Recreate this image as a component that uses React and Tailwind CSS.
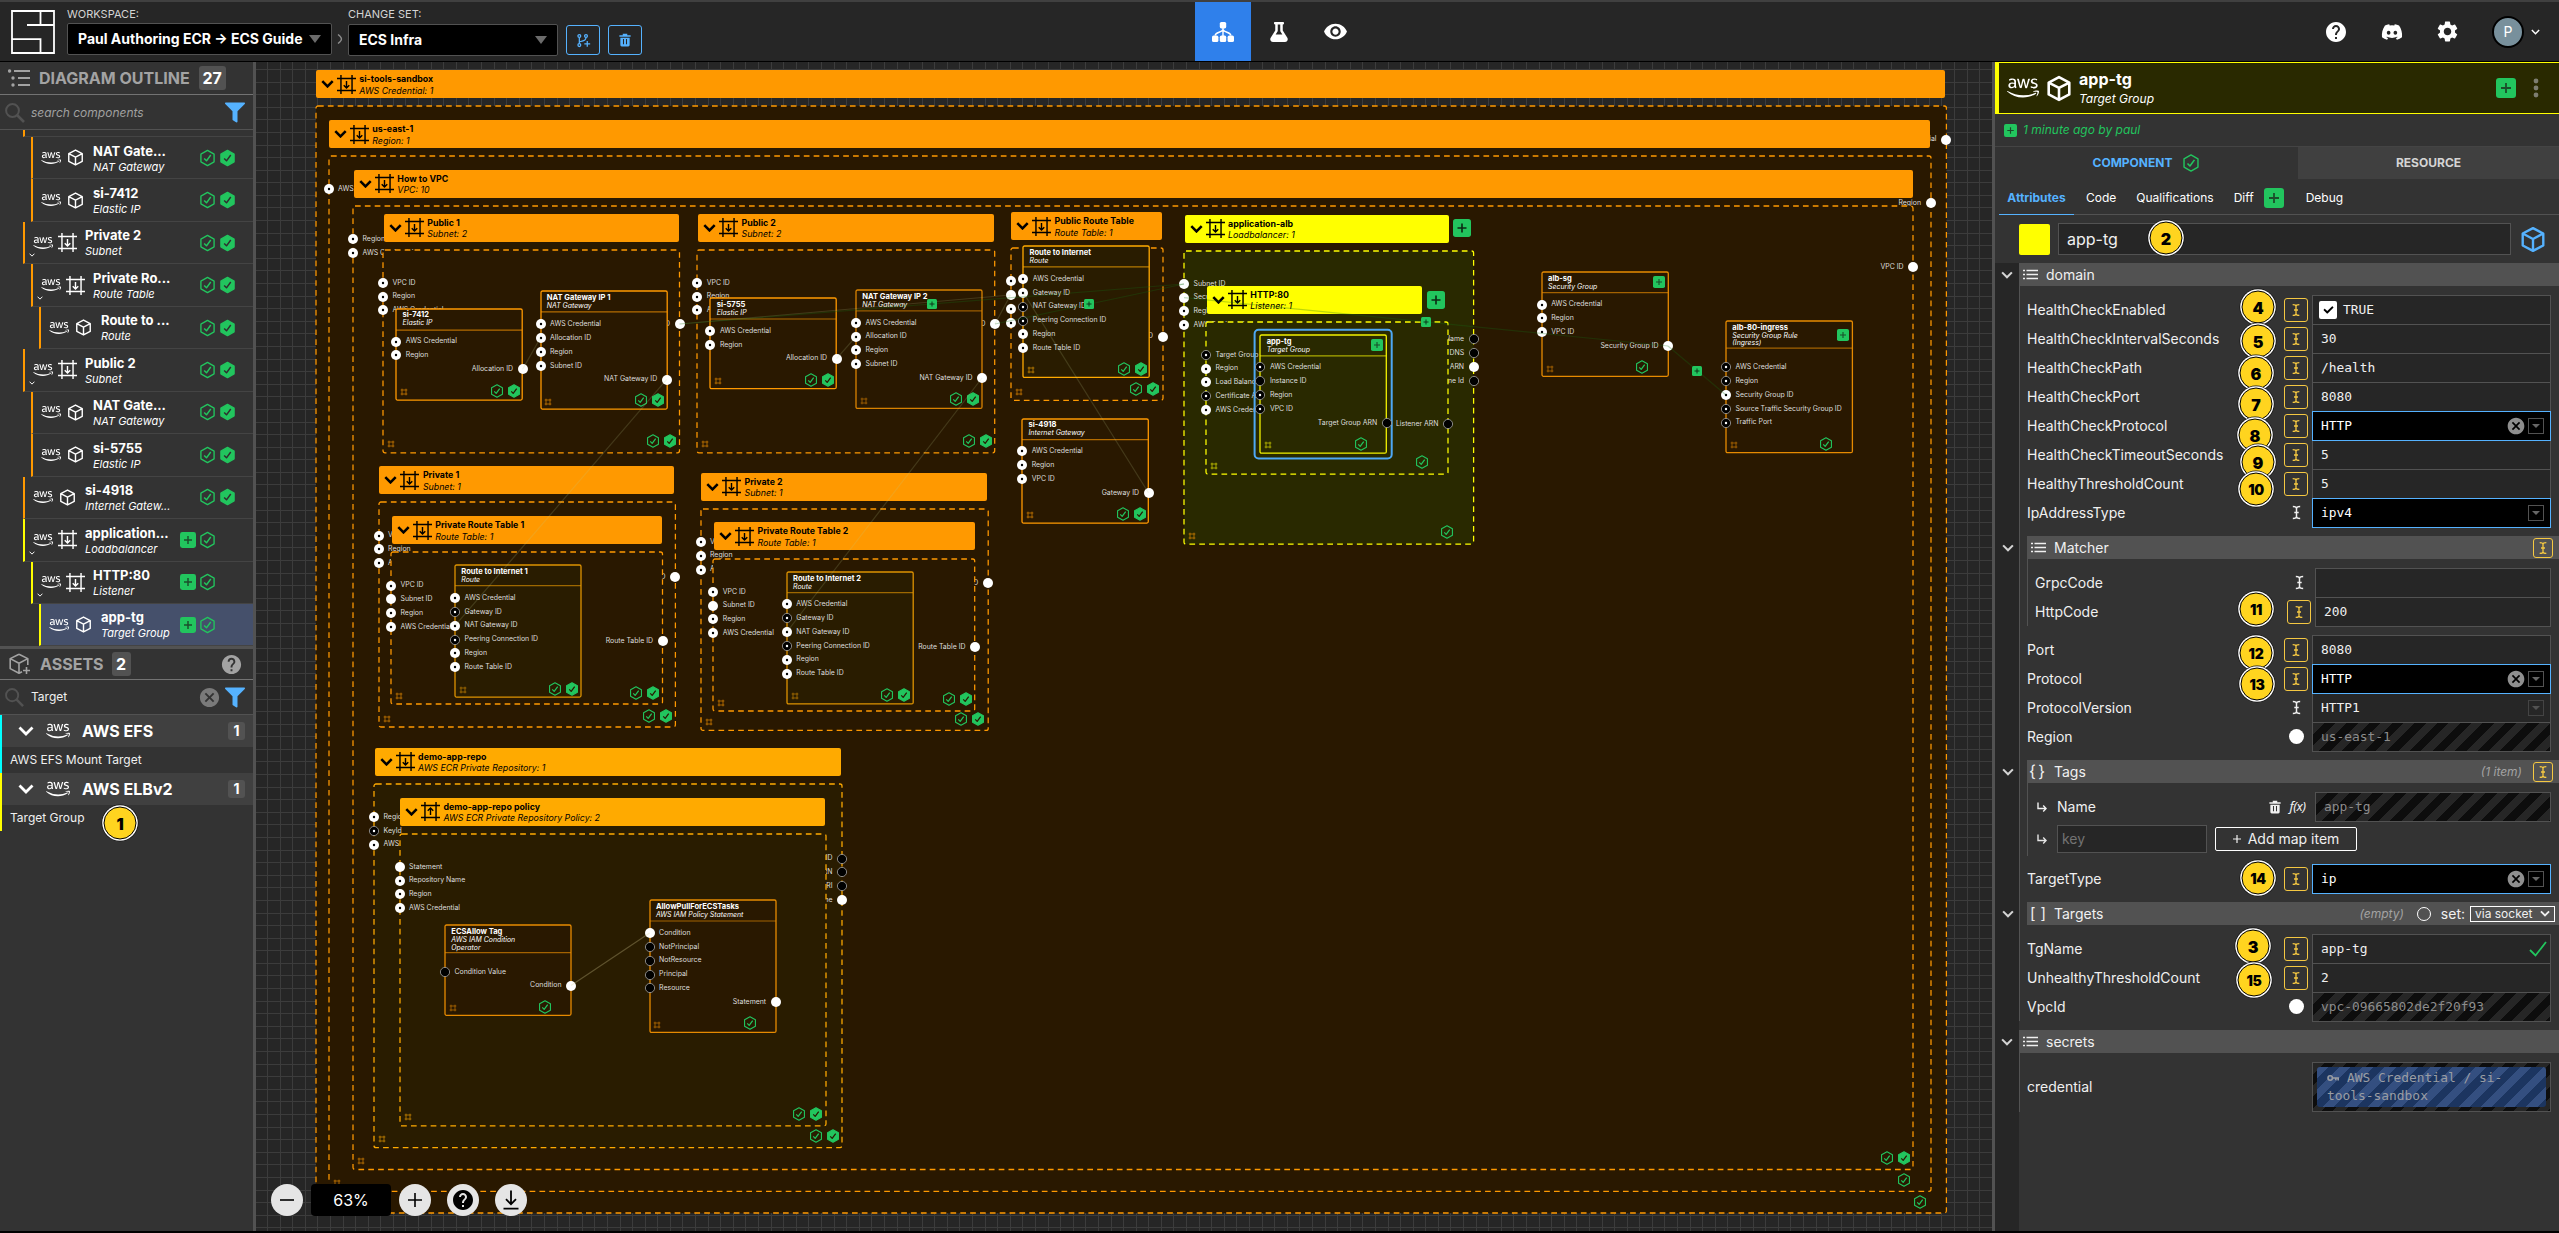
import React from 'react';
import { FaAws, FaFilter, FaFlask, FaDiscord, FaCheck } from 'react-icons/fa';
import { MdVisibility, MdSettings, MdHelp, MdCancel } from 'react-icons/md';

/* ---------- icons ---------- */

const Aws = ({ className }) => <FaAws className={className} />;

const Cube = ({ className, w = 2 }) => (
  <svg viewBox="0 0 24 24" className={className} fill="none" stroke="currentColor" strokeWidth={w} strokeLinejoin="round">
    <path d="M12 1.5 21.5 6.5V17.5L12 22.5 2.5 17.5V6.5Z M2.5 6.5 12 11.5 21.5 6.5 M12 11.5V22.5" />
  </svg>
);

const FrameIcon = ({ className, up = false }) => (
  <svg viewBox="0 0 24 24" className={className} fill="none" stroke="currentColor" strokeWidth="1.8">
    <path d="M5 0V24M19 0V24M0 4.5H24M0 19.5H24" />
    <path d={up ? 'M12 16.5V8M8.5 11.2 12 7.7 15.5 11.2' : 'M12 7.5V16M8.5 12.8 12 16.3 15.5 12.8'} />
  </svg>
);

const HashIcon = ({ className }) => (
  <svg viewBox="0 0 12 12" className={className} fill="none" stroke="currentColor" strokeWidth="1.3">
    <path d="M3 1V11M9 1V11M1 3H11M1 9H11" />
  </svg>
);

const HexCheck = ({ className, filled = false, dark = '#2f2f2f' }) => (
  <svg viewBox="0 0 24 24" className={className} fill="none" strokeLinejoin="round">
    <path d="M12 1.3 21.3 6.6V17.4L12 22.7 2.7 17.4V6.6Z" fill={filled ? '#22c55e' : 'none'} stroke="#22c55e" strokeWidth="1.9" />
    <path d="M7.3 12.6 10.6 16 16.6 7.8" stroke={filled ? dark : '#22c55e'} strokeWidth="2.1" />
  </svg>
);

const Chevron = ({ className, w = 3 }) => (
  <svg viewBox="0 0 16 10" className={className} fill="none" stroke="currentColor" strokeWidth={w}>
    <path d="M1.5 1.5 8 8 14.5 1.5" />
  </svg>
);

const PlusBadge = ({ className, dark = '#1b4d2b' }) => (
  <svg viewBox="0 0 20 20" className={className}>
    <rect width="20" height="20" rx="3" fill="#22c55e" />
    <path d="M10 5V15M5 10H15" stroke={dark} strokeWidth="1.8" />
  </svg>
);

const ListIcon = ({ className }) => (
  <svg viewBox="0 0 15 11" className={className} stroke="currentColor" strokeWidth="1.6">
    <path d="M0 1.5H2M0 5.5H2M0 9.5H2M3.5 1.5H15M3.5 5.5H15M3.5 9.5H15" />
  </svg>
);

const OutlineIcon = ({ className }) => (
  <svg viewBox="0 0 22 18" className={className} stroke="currentColor" strokeWidth="1.8" fill="currentColor">
    <path d="M6 2H22M10 9H22M10 16H22" />
    <circle cx="1.6" cy="2" r="0.8" />
    <circle cx="5" cy="9" r="0.8" />
    <circle cx="5" cy="16" r="0.8" />
  </svg>
);

const SearchIcon = ({ className }) => (
  <svg viewBox="0 0 20 20" className={className} fill="none" stroke="currentColor" strokeWidth="2">
    <circle cx="7.5" cy="7.5" r="6.4" />
    <path d="M12 12 19 19" strokeWidth="2.6" />
  </svg>
);

const TextCursor = ({ className }) => (
  <svg viewBox="0 0 12 16" className={className} fill="none" stroke="currentColor" strokeWidth="1.6">
    <path d="M2 1.5C4 1.5 6 2 6 3.6 6 2 8 1.5 10 1.5M6 3V13M2 14.5C4 14.5 6 14 6 12.4 6 14 8 14.5 10 14.5M3.6 8H8.4" />
  </svg>
);

const TrashIcon = ({ className }) => (
  <svg viewBox="0 0 16 18" className={className} fill="currentColor" fillRule="evenodd">
    <path d="M5 0.8H11V2.6H15.5V4.8H0.5V2.6H5ZM1.8 6H14.2V15.6Q14.2 17.5 12.3 17.5H3.7Q1.8 17.5 1.8 15.6ZM5.3 7.5V14.8H6.7V7.5ZM9.3 7.5V14.8H10.7V7.5Z" />
  </svg>
);

const KeyIcon = ({ className }) => (
  <svg viewBox="0 0 12 8" className={className} fill="none" stroke="currentColor" strokeWidth="1.6">
    <circle cx="3.2" cy="4" r="2.2" />
    <path d="M5.4 4H11.2V6.6M8.8 4V6.2" />
  </svg>
);

const BranchPlus = ({ className }) => (
  <svg viewBox="0 0 18 18" className={className} fill="none" stroke="currentColor" strokeWidth="1.5">
    <circle cx="4" cy="3.5" r="1.7" />
    <circle cx="4" cy="14.5" r="1.7" />
    <circle cx="12" cy="3.5" r="1.7" />
    <path d="M4 5.2V12.8M12 5.2C12 8 11 9 4.5 10.5M13.5 9.5V16.5M10 13H17" />
  </svg>
);

const SitemapIcon = ({ className }) => (
  <svg viewBox="0 0 22 20" className={className} fill="currentColor">
    <rect x="7.8" y="0" width="6.4" height="6.4" rx="1.6" />
    <rect x="0" y="13.6" width="6.4" height="6.4" rx="1.6" />
    <rect x="7.8" y="13.6" width="6.4" height="6.4" rx="1.6" />
    <rect x="15.6" y="13.6" width="6.4" height="6.4" rx="1.6" />
    <path d="M11 6V14M3.2 13.6C3.2 9.5 10 11 11 7.5 12 11 18.8 9.5 18.8 13.6" fill="none" stroke="currentColor" strokeWidth="1.4" />
  </svg>
);

const Logo = ({ className }) => (
  <svg viewBox="0 0 44 44" className={className} fill="none" stroke="#fff" strokeWidth="1.8">
    <path d="M1 1H43V43H1ZM29.5 1V15M16 15H43M1 29.2H29.5V43" />
  </svg>
);

const ReturnArrow = ({ className }) => (
  <svg viewBox="0 0 10 10" className={className} fill="none" stroke="currentColor" strokeWidth="1.4">
    <path d="M1 0.5V6.5H9M6.2 3.6 9.1 6.5 6.2 9.4" />
  </svg>
);

/* ---------- top bar ---------- */

const Triangle = () => (
  <svg viewBox="0 0 12 8" className="h-[8px] w-[12px]" fill="#6b6b6b">
    <path d="M0 0H12L6 8Z" />
  </svg>
);

function TopBar() {
  return (
    <header className="flex h-[62px] justify-between border-t-2 border-b-[1px] border-t-[#404040] border-b-black bg-[#262626] text-white">
      <div className="flex w-[1195px] items-start">
        <Logo className="mt-[8px] ml-[11px] h-[44px] w-[44px]" />
        <div className="ml-[12px] pt-[5px]">
          <div className="text-[11px] leading-[14px] text-[#d4d4d4]">WORKSPACE:</div>
          <div className="mt-[2px] flex h-[32px] w-[265px] items-center justify-between rounded-[2px] border border-[#525252] bg-black pr-[10px] pl-[10px] text-sm font-bold whitespace-nowrap">
            Paul Authoring ECR → ECS Guide
            <Triangle />
          </div>
        </div>
        <svg viewBox="0 0 6 10" className="mt-[32px] ml-[5px] h-[10px] w-[6px]" fill="none" stroke="#8c8c8c" strokeWidth="1.3">
          <path d="M1 0.5C3 2 4.5 4 4.5 5 4.5 6 3 8 1 9.5" />
        </svg>
        <div className="ml-[5px] pt-[5px]">
          <div className="text-[11px] leading-[14px] text-[#d4d4d4]">CHANGE SET:</div>
          <div className="mt-[3px] flex h-[32px] w-[210px] items-center justify-between rounded-[2px] border border-[#525252] bg-black pr-[10px] pl-[10px] text-sm font-bold">
            ECS Infra
            <Triangle />
          </div>
        </div>
        <div className="mt-[23px] ml-[8px] flex gap-2 text-[#55b2ff]">
          <div className="flex h-[30px] w-[34px] items-center justify-center rounded-[3px] border border-[#55b2ff]">
            <BranchPlus className="h-[15px] w-[15px]" />
          </div>
          <div className="flex h-[30px] w-[34px] items-center justify-center rounded-[3px] border border-[#55b2ff]">
            <TrashIcon className="h-[14px] w-[12px]" />
          </div>
        </div>
      </div>
      <nav className="flex flex-1">
        <div className="flex w-[56px] items-center justify-center bg-[#2f80eb]">
          <SitemapIcon className="h-[20px] w-[22px]" />
        </div>
        <div className="flex w-[56px] items-center justify-center">
          <FaFlask className="h-[20px] w-[20px]" />
        </div>
        <div className="flex w-[56px] items-center justify-center">
          <MdVisibility className="h-[25px] w-[25px]" />
        </div>
      </nav>
      <div className="flex items-center pr-[19px]">
        <MdHelp className="mr-[33px] h-[24px] w-[24px]" />
        <FaDiscord className="mr-[32px] h-[22px] w-[22px]" />
        <MdSettings className="mr-[32px] h-[25px] w-[25px]" />
        <div className="flex h-[32px] w-[32px] items-center justify-center rounded-full border-2 border-black bg-[#78909c] text-sm">P</div>
        <Chevron className="ml-[7px] h-[6px] w-[9px]" w={2.6} />
      </div>
    </header>
  );
}

/* ---------- left sidebar ---------- */

const OUTLINE_ROWS = [
  { d: 1, name: 'NAT Gate...', sub: 'NAT Gateway' },
  { d: 1, name: 'si-7412', sub: 'Elastic IP' },
  { d: 0, name: 'Private 2', sub: 'Subnet', frame: true },
  { d: 1, name: 'Private Ro...', sub: 'Route Table', frame: true },
  { d: 2, name: 'Route to ...', sub: 'Route' },
  { d: 0, name: 'Public 2', sub: 'Subnet', frame: true },
  { d: 1, name: 'NAT Gate...', sub: 'NAT Gateway' },
  { d: 1, name: 'si-5755', sub: 'Elastic IP' },
  { d: 0, name: 'si-4918', sub: 'Internet Gatew...' },
  { d: 0, name: 'application...', sub: 'Loadbalancer', frame: true, added: true },
  { d: 1, name: 'HTTP:80', sub: 'Listener', frame: true, added: true },
  { d: 2, name: 'app-tg', sub: 'Target Group', added: true, selected: true },
];

const INDENT = ['ml-[23px]', 'ml-[31px]', 'ml-[39px]'];

function OutlineRow({ row }) {
  return (
    <div
      className={`flex h-[42.46px] shrink-0 border-b border-l-2 border-b-[#444] ${INDENT[row.d]} ${row.added ? 'border-l-[#ffff00]' : 'border-l-[#ff9900]'} ${row.selected ? 'bg-[#45506b]' : ''}`}
    >
      <div className="relative flex w-[60px] shrink-0 items-center pl-[8px]">
        <Aws className="h-[20px] w-[20px]" />
        <div className="ml-[3px] flex w-[22px] justify-center">
          {row.frame ? <FrameIcon className="h-[19px] w-[19px]" /> : <Cube className="h-[17px] w-[17px]" />}
        </div>
        {row.frame && <Chevron className="absolute bottom-[6px] left-[4px] h-[4px] w-[6px]" w={2.6} />}
      </div>
      <div className="min-w-0 flex-1 pt-[5.5px] whitespace-nowrap">
        <div className="text-[13px] leading-[17px] font-bold">{row.name}</div>
        <div className="text-[11px] leading-[15px] italic">{row.sub}</div>
      </div>
      <div className={`flex items-center gap-[3px] ${row.added ? 'pr-[37px]' : 'pr-[17px]'}`}>
        {row.added && <PlusBadge className="h-[16px] w-[16px]" />}
        <HexCheck className="h-[18px] w-[17px]" />
        {!row.added && <HexCheck className="h-[18px] w-[17px]" filled />}
      </div>
    </div>
  );
}

function AssetGroup({ name, item, cyan }) {
  return (
    <div className={`border-l-2 ${cyan ? 'border-[#00ffff]' : 'border-[#ffff00]'}`}>
      <div className="flex h-[32px] items-center bg-[#404040] pr-[8px] pl-[16px]">
        <Chevron className="h-[10px] w-[16px]" w={2.8} />
        <Aws className="ml-[12px] h-[24px] w-[24px]" />
        <span className="ml-[12px] flex-1 text-base font-bold">{name}</span>
        <span className="flex h-[18px] w-[17px] items-center justify-center rounded-[3px] bg-[#525252] text-sm font-bold">1</span>
      </div>
      <div className="flex h-[26px] items-center pl-[8px] text-xs text-[#f0f0f0]">{item}</div>
    </div>
  );
}

function Marker({ n, className }) {
  return (
    <div
      className={`absolute z-20 flex h-[33px] w-[33px] -translate-x-1/2 -translate-y-1/2 items-center justify-center rounded-full border border-black bg-[#ffd41f] font-black text-black shadow-[0_0_0_1.3px_#fff,0_0_0_2px_#111] ${n > 9 ? 'text-[14px] tracking-[-0.3px]' : 'text-[16px]'} ${className}`}
    >
      {n}
    </div>
  );
}

function Sidebar() {
  return (
    <aside className="relative flex w-[256px] shrink-0 flex-col border-r-[3px] border-[#525252] bg-[#333] text-white">
      <div className="flex h-[33px] items-center border-b border-[#737373] pl-[8px] text-[#a3a3a3]">
        <OutlineIcon className="h-[18px] w-[22px]" />
        <span className="ml-[9px] text-base font-bold">DIAGRAM OUTLINE</span>
        <span className="ml-[9px] flex h-[24px] w-[27px] items-center justify-center rounded-[3px] bg-[#525252] text-base font-bold text-white">27</span>
      </div>
      <div className="flex h-[35px] items-center justify-between border-b border-[#525252] pt-px pr-[8px] pl-[5px]">
        <SearchIcon className="h-[20px] w-[20px] text-[#525252]" />
        <span className="ml-[6px] flex-1 text-xs text-[#a0a0a0] italic">search components</span>
        <FaFilter className="h-[21px] w-[20px] text-[#55b2ff]" />
      </div>
      <div className="ml-[23px] h-[7px] shrink-0 border-b border-l-2 border-b-[#444] border-l-[#ff9900]" />
      {OUTLINE_ROWS.map((row, i) => (
        <OutlineRow key={i} row={row} />
      ))}
      <div className="flex h-[34px] items-center border-t-[3px] border-b border-t-[#525252] border-b-[#737373] pr-[10px] pl-[9px] text-[#a3a3a3]">
        <svg viewBox="0 0 22 22" className="h-[22px] w-[22px]" fill="none" stroke="currentColor" strokeWidth="1.6" strokeLinejoin="round">
          <path d="M10 1.2 18.8 5.6V12M10 1.2 1.2 5.6V15.6L10 20.2 13 18.8M1.2 5.6 10 10.2 18.8 5.6M10 10.2V20.2M17.5 14V21M14 17.5H21" />
        </svg>
        <span className="ml-[9px] text-base font-bold">ASSETS</span>
        <span className="ml-[8px] flex h-[24px] w-[19px] items-center justify-center rounded-[3px] bg-[#525252] text-base font-bold text-white">2</span>
        <MdHelp className="ml-auto h-[23px] w-[23px]" />
      </div>
      <div className="flex h-[35px] items-center border-b border-[#525252] pr-[8px] pl-[5px]">
        <SearchIcon className="h-[19px] w-[19px] text-[#525252]" />
        <span className="ml-[7px] flex-1 text-xs text-[#f0f0f0]">Target</span>
        <MdCancel className="h-[23px] w-[23px] text-[#7a7a7a]" />
        <FaFilter className="ml-[4px] h-[21px] w-[20px] text-[#55b2ff]" />
      </div>
      <AssetGroup name="AWS EFS" item="AWS EFS Mount Target" cyan />
      <AssetGroup name="AWS ELBv2" item="Target Group" />
      <Marker n={1} className="top-[761px] left-[120px]" />
    </aside>
  );
}

/* ---------- diagram ----------
   World coordinates share their origin with the window's top left corner. */

const OR = { line: '#ff9900', fill: '#291800' };
const AM = { line: '#ffaa00', fill: '#291c00' };
const YE = { line: '#ffff00', fill: '#292900' };
const RT = { line: '#dd9200', fill: '#291c00' };
const AT = { line: '#f2f200', fill: '#292900' };
const DK = { line: '#e68a00', fill: '#291800' };

const STEP = 13.87;
const STD = ['VPC ID', 'Region', 'AWS Credential'];
const RT_IN = ['VPC ID', '*Subnet ID', 'Region', 'AWS Credential'];
const ROUTE_IN = ['AWS Credential', 'Gateway ID', '!NAT Gateway ID', '!Peering Connection ID', 'Region', 'Route Table ID'];
const ROUTE_PRIV = ['AWS Credential', '!Gateway ID', 'NAT Gateway ID', '!Peering Connection ID', 'Region', 'Route Table ID'];

/* Socket label prefixes: "*" filled, "!" empty with a dot, "#" empty, none = filled with a dot. */
const FRAMES = [
  { c: OR, n: 'si-tools-sandbox', s: 'AWS Credential: 1', h: [315.8, 70, 1945.3], b: [315.6, 106.3, 1946, 1213.3], l: [], r: ['*AWS Credential'], bad: 1 },
  { c: OR, n: 'us-east-1', s: 'Region: 1', h: [328.8, 120, 1930], b: [328.5, 156, 1930.5, 1191.3], l: ['AWS Credential'], r: ['*Region'], bad: 1 },
  { c: OR, n: 'How to VPC', s: 'VPC: 10', h: [353.8, 169.8, 1912.7], b: [353, 205.8, 1913, 1169.3], l: ['Region', 'AWS Credential'], r: ['*VPC ID'], bad: 2 },
  { c: OR, n: 'Public 1', s: 'Subnet: 2', h: [383.7, 213.5, 678.8], b: [383, 249.5, 679.5, 452.3], l: STD, r: ['*Subnet ID'], bad: 2 },
  { c: OR, n: 'Public 2', s: 'Subnet: 2', h: [698, 213.5, 994], b: [697.3, 249.5, 995, 452.3], l: STD, r: ['*Subnet ID'], bad: 2 },
  { c: OR, n: 'Public Route Table', s: 'Route Table: 1', h: [1011, 212, 1162], b: [1010.5, 248, 1162.5, 400.3], l: ['VPC ID', '*Subnet ID', 'Region', 'AWS Credential'], r: ['*Route Table ID'], bad: 2 },
  { c: YE, n: 'application-alb', s: 'Loadbalancer: 1', h: [1184.6, 214.5, 1448.6], b: [1184, 250.5, 1473.6, 543.7], l: ['*Subnet ID', '*Security Group ID', 'Region', 'AWS Credential'], r: ['#Name', '#DNS', '*ARN', '#Hosted Zone Id'], bad: 1, hash: '#ff9900' },
  { c: YE, n: 'HTTP:80', s: 'Listener: 1', h: [1206.8, 285.7, 1422.5], b: [1206, 321.5, 1448, 473.7], l: ['!Target Group ARN', 'Region', 'Load Balancer ARN', '!Certificate ARN', 'AWS Credential'], r: ['#Listener ARN'], bad: 1 },
  { c: OR, n: 'Private 1', s: 'Subnet: 1', h: [379.4, 466, 674.4], b: [378.6, 502.3, 675, 727.3], l: STD, r: ['*Subnet ID'], bad: 2 },
  { c: OR, n: 'Private 2', s: 'Subnet: 1', h: [701, 472.5, 987], b: [700.5, 508.6, 987.7, 730], l: STD, r: ['*Subnet ID'], bad: 2 },
  { c: OR, n: 'Private Route Table 1', s: 'Route Table: 1', h: [391.7, 516, 661.7], b: [391, 552.3, 662.5, 704.3], l: RT_IN, r: ['*Route Table ID'], bad: 2 },
  { c: OR, n: 'Private Route Table 2', s: 'Route Table: 1', h: [714, 522.4, 974.5], b: [713.3, 558.5, 975, 710.5], l: RT_IN, r: ['*Route Table ID'], bad: 2 },
  { c: AM, n: 'demo-app-repo', s: 'AWS ECR Private Repository: 1', h: [374.6, 747.8, 841.5], b: [374, 783.7, 842, 1147.3], l: ['Region', '!KeyId', 'AWS Credential'], r: ['#ID', '#ARN', '#URI', '*Name'], bad: 2 },
  { c: AM, n: 'demo-app-repo policy', s: 'AWS ECR Private Repository Policy: 2', up: true, h: [400, 797.6, 825], b: [399.5, 833.5, 825.5, 1125.4], l: ['*Statement', 'Repository Name', 'Region', 'AWS Credential'], r: [], bad: 2 },
];

const NODES = [
  { c: OR, n: 'si-7412', s: ['Elastic IP'], b: [396.3, 308.5, 522.5, 399.6], ln: 329.7, l: ['AWS Credential', 'Region'], r: ['*Allocation ID'], bad: 2 },
  { c: OR, n: 'NAT Gateway IP 1', s: ['NAT Gateway'], b: [540.5, 291.3, 666.7, 409.4], ln: 312.2, l: ['AWS Credential', 'Allocation ID', 'Region', 'Subnet ID'], r: ['*NAT Gateway ID'], bad: 2 },
  { c: OR, n: 'si-5755', s: ['Elastic IP'], b: [710.4, 298, 836.6, 388.7], ln: 319, l: ['AWS Credential', 'Region'], r: ['*Allocation ID'], bad: 2 },
  { c: { line: '#d98200', fill: '#291800' }, n: 'NAT Gateway IP 2', s: ['NAT Gateway'], b: [856, 290, 982, 408.4], ln: 310.8, l: ['AWS Credential', 'Allocation ID', 'Region', 'Subnet ID'], r: ['*NAT Gateway ID'], bad: 2 },
  { c: AM, n: 'Route to Internet', s: ['Route'], b: [1023.3, 246.2, 1149.5, 377.6], ln: 267, l: ROUTE_IN, r: [], bad: 2 },
  { c: OR, n: 'si-4918', s: ['Internet Gateway'], b: [1022.2, 418.5, 1148.5, 522.6], ln: 439.2, l: ['AWS Credential', 'Region', 'VPC ID'], r: ['*Gateway ID'], bad: 2 },
  { c: DK, n: 'alb-sg', s: ['Security Group'], b: [1541.7, 272, 1668, 376.3], ln: 292.6, l: ['AWS Credential', 'Region', 'VPC ID'], r: ['*Security Group ID'], bad: 1, plus: 1 },
  { c: DK, n: 'alb-80-ingress', s: ['Security Group Rule', '(Ingress)'], b: [1726, 321, 1852.4, 452.7], ln: 348.2, off: 19, l: ['!AWS Credential', '!Region', 'Security Group ID', '!Source Traffic Security Group ID', '!Traffic Port'], r: [], bad: 1, plus: 1 },
  { c: AT, n: 'app-tg', s: ['Target Group'], b: [1260.4, 334.6, 1386.7, 452.8], ln: 355.5, l: ['!AWS Credential', '#Instance ID', '!Region', '!VPC ID'], r: ['#Target Group ARN'], bad: 1, plus: 1, sel: true },
  { c: RT, n: 'Route to Internet 1', s: ['Route'], b: [455, 565.4, 581, 697.5], ln: 586, l: ROUTE_PRIV, r: [], bad: 2 },
  { c: RT, n: 'Route to Internet 2', s: ['Route'], b: [786.8, 571.6, 913, 703.5], ln: 592.3, l: ROUTE_PRIV, r: [], bad: 2 },
  { c: DK, n: 'ECSAllow Tag', s: ['AWS IAM Condition', 'Operator'], b: [445, 925.4, 571, 1015.7], ln: 953, off: 18.8, l: ['#Condition Value'], r: ['*Condition'], bad: 1 },
  { c: DK, n: 'AllowPullForECSTasks', s: ['AWS IAM Policy Statement'], b: [649.6, 900, 775.6, 1032.4], ln: 921, l: ['*Condition', '#NotPrincipal', '#NotResource', '#Principal', '#Resource'], r: ['*Statement'], bad: 1 },
];

const FAINT = 'rgba(190,205,140,0.18)';
const GREEN = 'rgba(20,110,20,0.28)';
const EDGES = [
  [522.5, 369.4, 540.5, 337.7, FAINT],
  [836.6, 358.6, 856, 336.5, FAINT],
  [679.5, 324, 1010.5, 295, FAINT],
  [995, 324, 1010.5, 295, FAINT],
  [679.5, 324, 1184, 284, GREEN],
  [995, 324, 1184, 284, GREEN],
  [666.7, 379.4, 455, 625.7, FAINT],
  [982, 378, 786.8, 632, FAINT],
  [1148.5, 492.7, 1023.3, 292.6, FAINT],
  [1184, 297.7, 1668, 346, GREEN],
  [1668, 346, 1726, 395, GREEN],
  [571, 985.6, 649.6, 933, 'rgba(220,210,150,0.3)'],
];

function Socket({ x, y, label, right }) {
  const kind = label[0];
  const text = '*!#'.includes(kind) ? label.slice(1) : label;
  const dark = kind === '!' || kind === '#';
  const dot = kind === '!' || !'*!#'.includes(kind);
  return (
    <>
      <svg viewBox="0 0 12 12" className="absolute h-[12px] w-[12px]" style={{ left: x - 6, top: y - 6 }}>
        <circle cx="6" cy="6" r={dark ? 4.6 : 5} fill={dark ? '#000' : '#fff'} stroke={dark ? '#a3a3a3' : '#fff'} strokeWidth={dark ? 0.8 : 0} />
        {dot && <circle cx="6" cy="6" r="1.2" fill={dark ? '#fff' : '#000'} />}
      </svg>
      <div
        className={`absolute h-[10px] text-[6.93px] leading-[10px] whitespace-nowrap text-[#dedede] ${right ? '-translate-x-full' : ''}`}
        style={{ left: right ? x - 9.5 : x + 9.5, top: y - 5.2 }}
      >
        {text}
      </div>
    </>
  );
}

function Sockets({ x1, x2, y, left, right }) {
  return (
    <>
      {left.map((t, i) => (
        <Socket key={'l' + i} x={x1} y={y + i * STEP} label={t} />
      ))}
      {right.map((t, i) => (
        <Socket key={'r' + i} x={x2} y={y + (left.length + i) * STEP} label={t} right />
      ))}
    </>
  );
}

function StatusBadges({ x, y, bad }) {
  return (
    <div className="absolute flex h-[14px] w-[31px] gap-[3px]" style={{ left: x - 33, top: y - 7 }}>
      <HexCheck className="h-[14px] w-[14px] shrink-0" />
      {bad === 2 && <HexCheck className="h-[14px] w-[14px] shrink-0" filled dark="#291800" />}
    </div>
  );
}

function Frame({ f }) {
  const [x1, y1, x2, y2] = f.b;
  const [hx, hy, hx2] = f.h;
  return (
    <>
      <div className="absolute flex h-[28px] items-center rounded-[2px] text-black" style={{ left: hx, top: hy, width: hx2 - hx, background: f.c.line }}>
        <Chevron className="ml-[5px] h-[8px] w-[13px]" w={3.2} />
        <FrameIcon className="ml-[3px] h-[19px] w-[19px]" up={f.up} />
        <div className="ml-[3.5px] pt-px whitespace-nowrap">
          <div className="text-[8.82px] leading-[11.5px] font-bold">{f.n}</div>
          <div className="text-[8.82px] leading-[11.5px] italic">{f.s}</div>
        </div>
      </div>
      <svg className="absolute overflow-visible" style={{ left: x1, top: y1 }} width={x2 - x1} height={y2 - y1}>
        <rect width={x2 - x1} height={y2 - y1} rx="2" fill={f.c.fill} stroke={f.c.line} strokeWidth="1.26" strokeDasharray="5.7 4.15" />
      </svg>
      <Sockets x1={x1} x2={x2} y={y1 + 33.2} left={f.l} right={f.r} />
      <StatusBadges x={x2 - 0.3} y={y2 - 11.4} bad={f.bad} />
      <div className="absolute h-[8px] w-[8px] opacity-70" style={{ left: x1 + 4, top: y2 - 12, color: f.hash || f.c.line }}>
        <HashIcon className="h-[8px] w-[8px]" />
      </div>
    </>
  );
}

function Node({ f }) {
  const [x1, y1, x2, y2] = f.b;
  const w = x2 - x1;
  const h = y2 - y1;
  return (
    <>
      <svg className="absolute overflow-visible" style={{ left: x1, top: y1 }} width={w} height={h}>
        {f.sel && <rect x="-5.4" y="-5.2" width={w + 10.8} height={h + 10.4} rx="4" fill="none" stroke="#4ea8f5" strokeWidth="2" />}
        <rect width={w} height={h} rx="1.5" fill={f.c.fill} stroke={f.c.line} strokeWidth="1.3" />
        <path d={`M0 ${f.ln - y1}H${w}`} stroke={f.c.line} strokeWidth="1.2" opacity="0.65" />
      </svg>
      <div className="absolute whitespace-nowrap text-white" style={{ left: x1 + 6.3, top: y1 + 1.9 }}>
        <div className="text-[7.56px] leading-[9px] font-bold">{f.n}</div>
        {f.s.map((t) => (
          <div key={t} className="text-[6.93px] leading-[7.4px] italic">
            {t}
          </div>
        ))}
      </div>
      {f.plus && (
        <div className="absolute h-[12px] w-[12px]" style={{ left: x2 - 15.4, top: (y1 + f.ln) / 2 - 6 }}>
          <PlusBadge className="h-[12px] w-[12px]" />
        </div>
      )}
      <Sockets x1={x1} x2={x2} y={f.ln + (f.off || 11.9)} left={f.l} right={f.r} />
      <StatusBadges x={x2} y={y2 - 9} bad={f.bad} />
      <div className="absolute h-[8px] w-[8px] opacity-70" style={{ left: x1 + 3.8, top: y2 - 11.8, color: f.c.line }}>
        <HashIcon className="h-[8px] w-[8px]" />
      </div>
    </>
  );
}

const EDGE_PLUS = [
  [931.7, 304.2],
  [1089.4, 304],
  [1425.7, 322],
  [1696.8, 370.6],
];

const HEADER_PLUS = [
  [1462, 228.3],
  [1436, 299.5],
];

function Canvas() {
  return (
    <main className="relative flex-1 overflow-hidden bg-[#262626] bg-[repeating-linear-gradient(to_right,transparent_0_11px,#3c3c3c_11px_12px,transparent_12px_12.59px),repeating-linear-gradient(to_bottom,transparent_0_7px,#3c3c3c_7px_8px,transparent_8px_12.59px)]">
      <div className="absolute -top-[62px] -left-[256px] h-[1233px] w-[2559px]">
        {FRAMES.map((f) => (
          <Frame key={f.n} f={f} />
        ))}
        {NODES.map((f) => (
          <Node key={f.n} f={f} />
        ))}
        <svg className="pointer-events-none absolute inset-0 h-full w-full">
          {EDGES.map(([a, b, c, d, s], i) => (
            <line key={i} x1={a} y1={b} x2={c} y2={d} stroke={s} strokeWidth="1.2" />
          ))}
        </svg>
        {EDGE_PLUS.map(([x, y]) => (
          <div key={x} className="absolute h-[10px] w-[10px]" style={{ left: x - 5, top: y - 5 }}>
            <PlusBadge className="h-[10px] w-[10px]" dark="#0c2a14" />
          </div>
        ))}
        {HEADER_PLUS.map(([x, y]) => (
          <div key={x} className="absolute h-[18px] w-[18px]" style={{ left: x - 9, top: y - 9 }}>
            <PlusBadge className="h-[18px] w-[18px]" dark="#0c2a14" />
          </div>
        ))}
      </div>
      <div className="absolute bottom-[15px] left-[15px] flex items-center gap-2 text-black">
        <div className="flex h-8 w-8 items-center justify-center rounded-full bg-[#e5e5e5]">
          <svg viewBox="0 0 14 14" className="h-[14px] w-[14px]" stroke="currentColor" strokeWidth="1.6">
            <path d="M0 7H14" />
          </svg>
        </div>
        <div className="flex h-8 w-[80px] items-center justify-center rounded-[4px] bg-black text-base text-white">63%</div>
        <div className="flex h-8 w-8 items-center justify-center rounded-full bg-[#e5e5e5]">
          <svg viewBox="0 0 14 14" className="h-[14px] w-[14px]" stroke="currentColor" strokeWidth="1.6">
            <path d="M0 7H14M7 0V14" />
          </svg>
        </div>
        <div className="ml-2 flex h-8 w-8 items-center justify-center rounded-full bg-[#e5e5e5]">
          <MdHelp className="h-[24px] w-[24px]" />
        </div>
        <div className="ml-2 flex h-8 w-8 items-center justify-center rounded-full bg-[#e5e5e5]">
          <svg viewBox="0 0 16 20" className="h-[20px] w-[16px]" fill="none" stroke="currentColor" strokeWidth="1.8">
            <path d="M8 0.5V14M3 9.2 8 14.2 13 9.2M0.5 18.6H15.5" />
          </svg>
        </div>
      </div>
    </main>
  );
}

/* ---------- right panel ---------- */

const YellowCursor = ({ small }) => (
  <div className={`flex shrink-0 items-center justify-center rounded-[3px] border border-[#f5c842] text-[#f5c842] ${small ? 'h-[20px] w-[20px]' : 'h-[24px] w-[24px]'}`}>
    <TextCursor className="h-[14px] w-[10px]" />
  </div>
);

const STRIPES = 'bg-[repeating-linear-gradient(135deg,#262626_0_8px,#0d0d0d_8px_16px)]';

const DropBox = ({ dim }) => (
  <div className={`flex h-[16px] w-[16px] items-center justify-center border ${dim ? 'border-[#444] text-[#525252]' : 'border-[#525252] text-[#666]'}`}>
    <svg viewBox="0 0 8 4" className="h-[4px] w-[8px]" fill="currentColor">
      <path d="M0 0H8L4 4Z" />
    </svg>
  </div>
);

function Field({ label, value, mark = 'yellow', kind = 'text', nested, children }) {
  const skin =
    kind === 'select'
      ? 'relative z-10 border-[#55b2ff] bg-black text-white'
      : kind === 'locked'
        ? `border-[#525252] text-[#8c8c8c] ${STRIPES}`
        : 'border-[#525252] bg-[#262626] text-[#f0f0f0]';
  return (
    <div className="flex h-[29px] items-center pr-[8px] text-sm text-[#f0f0f0]">
      <span className="flex-1">{label}</span>
      <div className="mr-[4px] flex w-[24px] justify-center">
        {mark === 'yellow' && <YellowCursor />}
        {mark === 'plain' && <TextCursor className="h-[15px] w-[11px]" />}
        {mark === 'socket' && <div className="h-[15px] w-[15px] rounded-full bg-white" />}
        {mark === 'fn' && <span className="-ml-[3px] font-['Noto_Sans'] text-[13px] tracking-[-0.5px] italic">f(x)</span>}
      </div>
      <div className={`-mb-px flex h-[30px] items-center border pr-[6px] pl-[8px] font-['DejaVu_Sans_Mono',monospace] text-[12.9px] ${nested ? 'w-[236px]' : 'w-[239px]'} ${skin}`}>
        <span className="flex flex-1 items-center">{value}</span>
        {children}
      </div>
    </div>
  );
}

function Bar({ title, icon, nested, children }) {
  return (
    <div className="flex h-[23px] items-center">
      <div className={`flex w-[24px] shrink-0 justify-center text-[#d4d4d4] ${nested ? 'mr-[7px] -ml-[24px]' : ''}`}>
        <Chevron className="h-[8px] w-[12px]" w={2.8} />
      </div>
      <div className="flex h-full flex-1 items-center bg-[#525252] pl-[4px] text-sm text-[#f0f0f0]">
        <div className="flex w-[23px] items-center">{icon}</div>
        {title}
        <div className="ml-auto flex items-center text-xs">{children}</div>
      </div>
    </div>
  );
}

const XIcon = () => <MdCancel className="mr-[2px] h-[20px] w-[20px] text-[#8f8f8f]" />;

function Attributes() {
  const list = <ListIcon className="h-[11px] w-[15px]" />;
  return (
    <div className="flex-1 bg-[linear-gradient(to_right,#262626_24px,transparent_24px)]">
      <Bar title="domain" icon={list} />
      <div className="ml-[24px] border-l border-[#525252] pt-[9px]">
        <div className="pl-[7px]">
          <Field
            label="HealthCheckEnabled"
            value={
              <>
                <span className="mr-[6px] -ml-[2px] flex h-[18px] w-[18px] items-center justify-center rounded-[2px] bg-white text-black">
                  <FaCheck className="h-[10px] w-[11px]" />
                </span>
                TRUE
              </>
            }
          />
          <Field label="HealthCheckIntervalSeconds" value="30" />
          <Field label="HealthCheckPath" value="/health" />
          <Field label="HealthCheckPort" value="8080" />
          <Field label="HealthCheckProtocol" value="HTTP" kind="select">
            <XIcon />
            <DropBox />
          </Field>
          <Field label="HealthCheckTimeoutSeconds" value="5" />
          <Field label="HealthyThresholdCount" value="5" />
          <Field label="IpAddressType" value="ipv4" mark="plain" kind="select">
            <DropBox />
          </Field>
        </div>
        <div className="mt-[9px]">
          <Bar nested title="Matcher" icon={list}>
            <div className="mr-[6px]">
              <YellowCursor small />
            </div>
          </Bar>
          <div className="ml-[7px] border-l border-[#525252] pt-[9px] pl-[7px]">
            <Field nested label="GrpcCode" value="" mark="plain" />
            <Field nested label="HttpCode" value="200" />
          </div>
        </div>
        <div className="mt-[9px] pl-[7px]">
          <Field label="Port" value="8080" />
          <Field label="Protocol" value="HTTP" kind="select">
            <XIcon />
            <DropBox />
          </Field>
          <Field label="ProtocolVersion" value="HTTP1" mark="plain">
            <DropBox dim />
          </Field>
          <Field label="Region" value="us-east-1" mark="socket" kind="locked" />
        </div>
        <div className="mt-[9px]">
          <Bar nested title="Tags" icon={<span className="-ml-[2px] text-[16px] tracking-[2.5px]">{'{}'}</span>}>
            <span className="mr-[11px] text-[#a3a3a3] italic">(1 item)</span>
            <div className="mr-[6px]">
              <YellowCursor small />
            </div>
          </Bar>
          <div className="ml-[7px] h-[73px] border-l border-[#525252] pt-[9px] pl-[9px]">
            <Field
              nested
              label={
                <span className="flex items-center">
                  <ReturnArrow className="mr-[10px] h-[10px] w-[10px]" />
                  Name
                  <TrashIcon className="mr-[6px] ml-auto h-[14px] w-[12px]" />
                </span>
              }
              value="app-tg"
              mark="fn"
              kind="locked"
            />
            <div className="mt-[4px] flex items-center text-sm">
              <ReturnArrow className="mr-[10px] h-[10px] w-[10px] text-[#e5e5e5]" />
              <div className="flex h-[28px] w-[150px] items-center border border-[#525252] bg-[#262626] pl-[4px] text-[#737373]">key</div>
              <div className="ml-[8px] flex h-[24px] w-[142px] items-center justify-center rounded-[2px] border border-white text-[#f0f0f0]">
                <svg viewBox="0 0 8 8" className="mr-[7px] h-[8px] w-[8px]" stroke="currentColor" strokeWidth="1.2">
                  <path d="M0 4H8M4 0V8" />
                </svg>
                Add map item
              </div>
            </div>
          </div>
        </div>
        <div className="mt-[8px] pl-[7px]">
          <Field label="TargetType" value="ip" kind="select">
            <XIcon />
            <DropBox />
          </Field>
        </div>
        <div className="mt-[9px]">
          <Bar nested title="Targets" icon={<span className="-ml-[1px] text-[15px] tracking-[5px]">[]</span>}>
            <span className="mr-[13px] text-[#a3a3a3] italic">(empty)</span>
            <div className="mr-[10px] h-[14px] w-[14px] rounded-full border-[1.5px] border-white" />
            <span className="mr-[5px] text-sm">set:</span>
            <div className="mr-[4px] flex h-[16px] w-[85px] items-center justify-between border border-white px-[4px]">
              via socket
              <Chevron className="h-[7px] w-[10px]" w={3} />
            </div>
          </Bar>
        </div>
        <div className="mt-[9px] pl-[7px]">
          <Field label="TgName" value="app-tg">
            <svg viewBox="0 0 18 16" className="-mr-[3px] h-[16px] w-[18px]" fill="none" stroke="#22c55e" strokeWidth="1.8">
              <path d="M1 9 6.5 14.5 17 1" />
            </svg>
          </Field>
          <Field label="UnhealthyThresholdCount" value="2" />
          <Field label="VpcId" value="vpc-09665802de2f20f93" mark="socket" kind="locked" />
        </div>
      </div>
      <div className="mt-[9px]">
        <Bar title="secrets" icon={list} />
      </div>
      <div className="ml-[24px] flex h-[59px] items-center border-l border-[#525252] pt-[9px] pr-[8px] pl-[7px] text-sm text-[#f0f0f0]">
        <span className="flex-1">credential</span>
        <div className="h-[50px] w-[239px] border border-[#525252] bg-[repeating-linear-gradient(135deg,#262626_0_8px,#0d0d0d_8px_16px)] p-[4px]">
          <div className="h-full rounded-[3px] bg-[repeating-linear-gradient(135deg,#344f80_0_8px,#1c3560_8px_16px)] pl-[10px] font-['DejaVu_Sans_Mono',monospace] text-[12.9px] leading-[18px] text-[#9a9da3]">
            <div className="flex items-center pt-[2px]">
              <KeyIcon className="mr-[8px] h-[8px] w-[12px]" />
              AWS Credential / si-
            </div>
            <div>tools-sandbox</div>
          </div>
        </div>
      </div>
    </div>
  );
}

function Panel() {
  return (
    <aside className="relative flex w-[567px] shrink-0 flex-col border-l-[3px] border-[#525252] bg-[#333] text-white">
      <div className="flex h-[52px] items-center border-y border-l-4 border-[#ffff00] bg-[#292900] pr-[20px] pl-[8px]">
        <Aws className="h-[32px] w-[32px]" />
        <Cube className="ml-[7px] h-[27px] w-[26px]" w={2.4} />
        <div className="ml-[7px] flex-1">
          <div className="text-base leading-[20px] font-bold">app-tg</div>
          <div className="text-xs leading-[19px] italic">Target Group</div>
        </div>
        <PlusBadge className="h-[20px] w-[20px]" />
        <svg viewBox="0 0 6 20" className="ml-[17px] h-[20px] w-[6px]" fill="#7d7d70">
          <circle cx="3" cy="3" r="2.4" />
          <circle cx="3" cy="10" r="2.4" />
          <circle cx="3" cy="17" r="2.4" />
        </svg>
      </div>
      <div className="flex h-[33px] items-center border-b border-[#444] pl-[9px] text-xs text-[#22c55e] italic">
        <PlusBadge className="mr-[6px] h-[13px] w-[13px]" />
        1 minute ago by paul
      </div>
      <div className="flex h-[32px] text-xs font-bold">
        <div className="flex w-[303px] items-center justify-center text-[#55b2ff]">
          COMPONENT
          <HexCheck className="ml-[10px] h-[18px] w-[18px]" />
        </div>
        <div className="flex flex-1 items-center justify-center bg-[#404040] text-[#d4d4d4]">RESOURCE</div>
      </div>
      <div className="ml-[4px] flex h-[36px] items-stretch border-b border-[#525252] text-xs">
        <div className="-mb-px flex w-[75px] items-center justify-center border-b border-[#55b2ff] pt-[3px] font-bold text-[#55b2ff]">Attributes</div>
        <div className="ml-[12px] flex items-center pt-[3px]">Code</div>
        <div className="ml-[20px] flex items-center pt-[3px]">Qualifications</div>
        <div className="ml-[20px] flex items-center pt-[3px]">
          Diff
          <PlusBadge className="ml-[10px] h-[20px] w-[20px]" />
        </div>
        <div className="ml-[22px] flex items-center pt-[3px]">Debug</div>
      </div>
      <div className="flex h-[48px] items-center pl-[24px]">
        <div className="h-[31px] w-[31px] rounded-[2px] bg-[#ffff00]" />
        <div className="ml-[8px] flex h-[32px] w-[453px] items-center border border-[#525252] bg-[#262626] pl-[8px] text-base text-[#f0f0f0]">app-tg</div>
        <Cube className="ml-[9px] h-[27px] w-[26px] text-[#55b2ff]" w={2.2} />
      </div>
      <Attributes />
      <Marker n={2} className="top-[176px] left-[171px]" />
      <Marker n={4} className="top-[245px] left-[263px]" />
      <Marker n={5} className="top-[279px] left-[263px]" />
      <Marker n={6} className="top-[311px] left-[261px]" />
      <Marker n={7} className="top-[342px] left-[261px]" />
      <Marker n={8} className="top-[373px] left-[260px]" />
      <Marker n={9} className="top-[400px] left-[263px]" />
      <Marker n={10} className="top-[427px] left-[261px]" />
      <Marker n={11} className="top-[547px] left-[261px]" />
      <Marker n={12} className="top-[591px] left-[261px]" />
      <Marker n={13} className="top-[622px] left-[262px]" />
      <Marker n={14} className="top-[816px] left-[263px]" />
      <Marker n={3} className="top-[884px] left-[258px]" />
      <Marker n={15} className="top-[918px] left-[259px]" />
    </aside>
  );
}

export default function App() {
  return (
    <div className="h-[1233px] w-[2559px] overflow-hidden bg-black font-['Inter',sans-serif]">
      <TopBar />
      <div className="flex h-[1169px]">
        <Sidebar />
        <Canvas />
        <Panel />
      </div>
    </div>
  );
}
